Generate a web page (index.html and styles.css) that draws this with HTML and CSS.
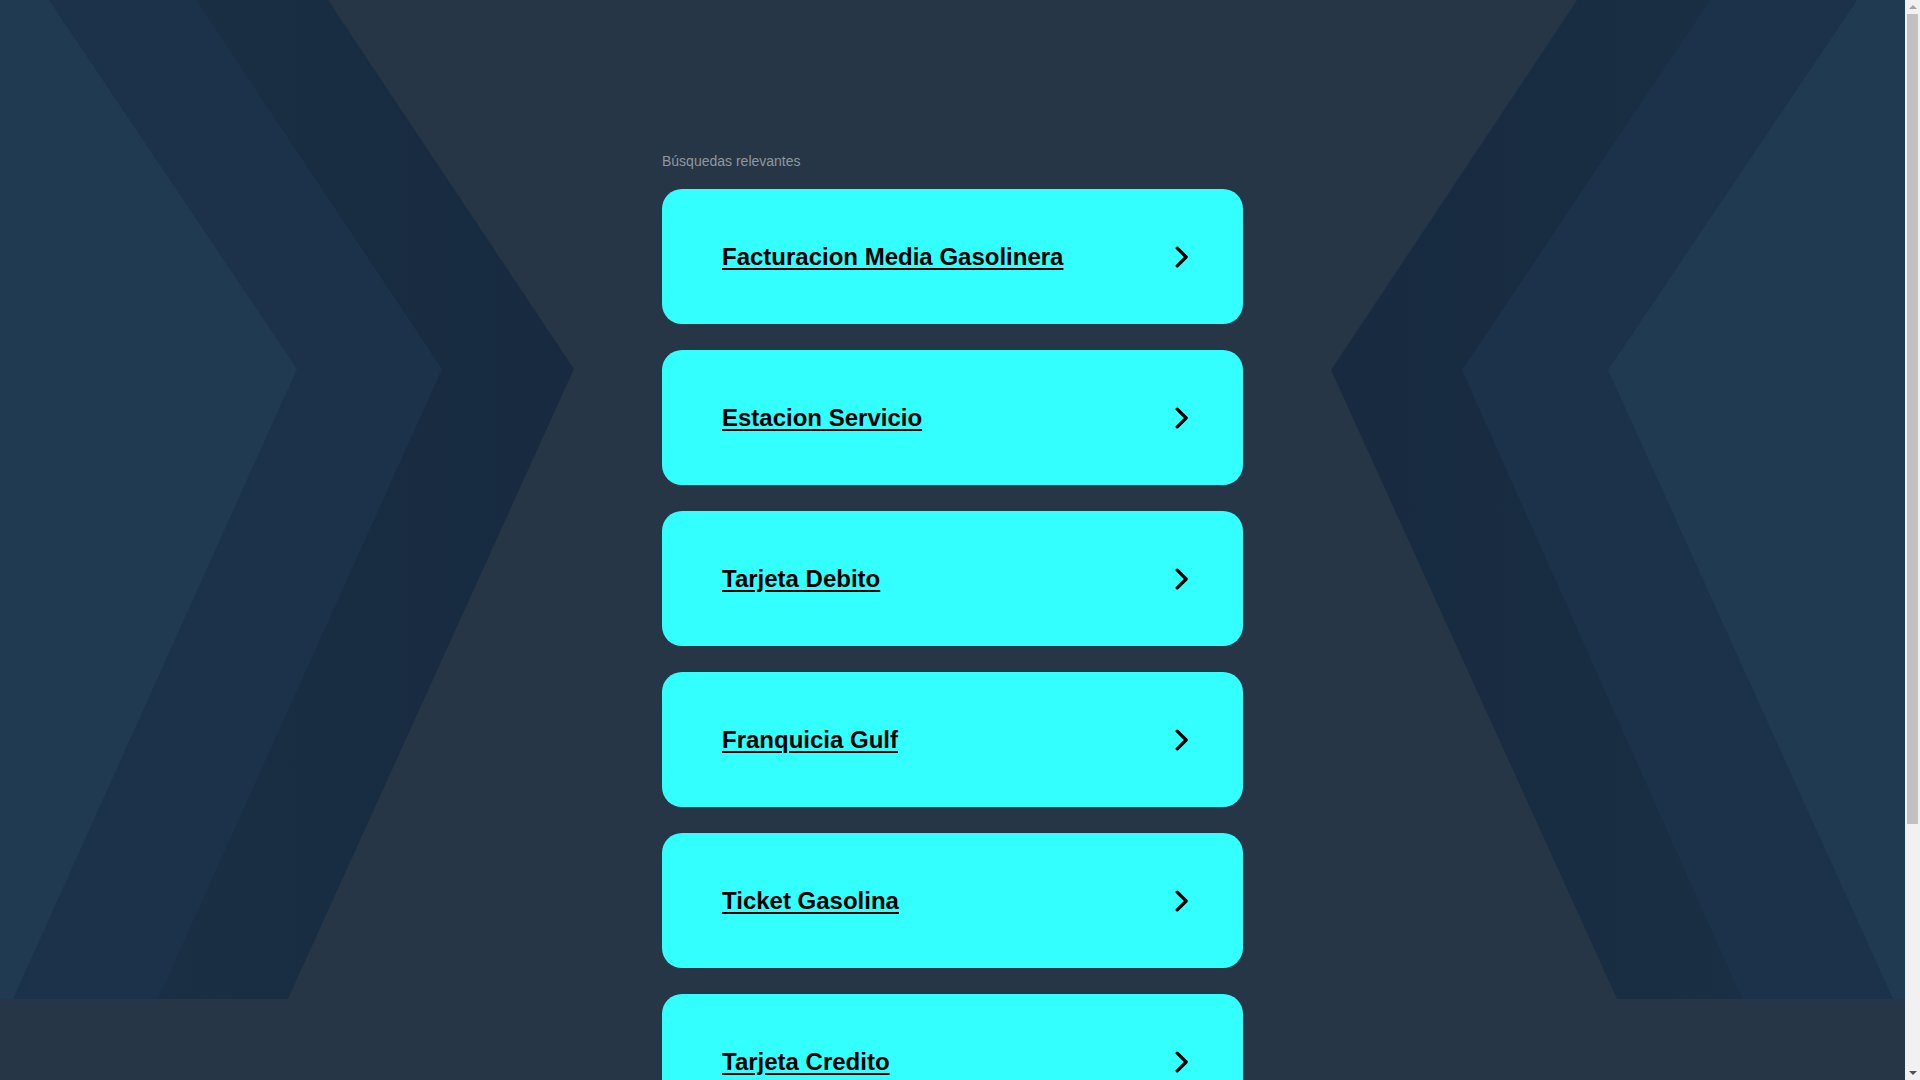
FILE: index.html
```html
<!DOCTYPE html>
<html lang="es">
<head>
<meta charset="utf-8">
<title>Búsquedas relevantes</title>
<link rel="stylesheet" href="styles.css">
</head>
<body>
<div class="page">
  <svg class="backdrop" viewBox="0 0 1905 999" preserveAspectRatio="none" aria-hidden="true">
    <defs>
      <linearGradient id="gl" x1="0" y1="0" x2="1" y2="0">
        <stop offset="0" stop-color="#1b3046"/>
        <stop offset="1" stop-color="#172a3f"/>
      </linearGradient>
      <linearGradient id="gr" x1="1" y1="0" x2="0" y2="0">
        <stop offset="0" stop-color="#1b3046"/>
        <stop offset="1" stop-color="#172a3f"/>
      </linearGradient>
    </defs>
    <polygon points="0,0 328,0 574,369 288,999 0,999" fill="url(#gl)"/>
    <polygon points="0,0 196,0 442,369 158,999 0,999" fill="#1c324a"/>
    <polygon points="0,0 49,0 297,369 13,999 0,999" fill="#1f3a51"/>
    <polygon points="1905,0 1577,0 1331,370 1617,999 1905,999" fill="url(#gr)"/>
    <polygon points="1905,0 1710,0 1462,370 1742,999 1905,999" fill="#1c324a"/>
    <polygon points="1905,0 1857,0 1608,370 1893,999 1905,999" fill="#1f3a51"/>
  </svg>
  <main class="content">
    <p class="label">Búsquedas relevantes</p>
    <ul class="links">
      <li><a class="card" href="#"><span class="card-text">Facturacion Media Gasolinera</span><svg class="chev" viewBox="0 0 14 22" width="14" height="22"><polyline points="2.2,2.2 11.2,11 2.2,19.8"/></svg></a></li>
      <li><a class="card" href="#"><span class="card-text">Estacion Servicio</span><svg class="chev" viewBox="0 0 14 22" width="14" height="22"><polyline points="2.2,2.2 11.2,11 2.2,19.8"/></svg></a></li>
      <li><a class="card" href="#"><span class="card-text">Tarjeta Debito</span><svg class="chev" viewBox="0 0 14 22" width="14" height="22"><polyline points="2.2,2.2 11.2,11 2.2,19.8"/></svg></a></li>
      <li><a class="card" href="#"><span class="card-text">Franquicia Gulf</span><svg class="chev" viewBox="0 0 14 22" width="14" height="22"><polyline points="2.2,2.2 11.2,11 2.2,19.8"/></svg></a></li>
      <li><a class="card" href="#"><span class="card-text">Ticket Gasolina</span><svg class="chev" viewBox="0 0 14 22" width="14" height="22"><polyline points="2.2,2.2 11.2,11 2.2,19.8"/></svg></a></li>
      <li><a class="card" href="#"><span class="card-text">Tarjeta Credito</span><svg class="chev" viewBox="0 0 14 22" width="14" height="22"><polyline points="2.2,2.2 11.2,11 2.2,19.8"/></svg></a></li>
    </ul>
  </main>
</div>
<div class="scrollbar" aria-hidden="true">
  <span class="sb-arrow sb-up"></span>
  <span class="sb-thumb"></span>
  <span class="sb-arrow sb-down"></span>
</div>
</body>
</html>
```

FILE: styles.css
```css
html, body {
  margin: 0;
  padding: 0;
}

body {
  background: #263646;
  font-family: "Liberation Sans", Arial, sans-serif;
  padding-right: 15px;
}

.page {
  display: grid;
  grid-template-columns: 100%;
}

.backdrop {
  grid-area: 1 / 1;
  align-self: start;
  width: 100%;
  height: 999px;
  display: block;
}

.content {
  grid-area: 1 / 1;
  width: 581px;
  margin: 0 auto;
  padding: 153px 0 274px;
  position: relative;
}

.label {
  margin: 0 0 20px;
  font-size: 14px;
  line-height: 16px;
  color: #8f989f;
}

.links {
  list-style: none;
  margin: 0;
  padding: 0;
  display: flex;
  flex-direction: column;
  gap: 26px;
}

.card {
  display: flex;
  align-items: center;
  box-sizing: border-box;
  height: 135px;
  padding: 0 54px 0 60px;
  background: #33ffff;
  border-radius: 20px;
  color: #000;
  text-decoration: none;
}

.card-text {
  font-size: 24px;
  font-weight: bold;
  text-decoration: underline;
  text-decoration-thickness: 2px;
  text-underline-offset: 3px;
}

.chev {
  margin-left: auto;
  flex: none;
  fill: none;
  stroke: #000;
  stroke-width: 3.2;
  stroke-linecap: round;
  stroke-linejoin: round;
}

/* imitation of the browser's vertical scrollbar */
.scrollbar {
  position: fixed;
  top: 0;
  right: 0;
  width: 15px;
  height: 100vh;
  background: #f1f1f1;
  display: flex;
  flex-direction: column;
  align-items: center;
}

.sb-arrow {
  flex: none;
  width: 0;
  height: 0;
  border-left: 4px solid transparent;
  border-right: 4px solid transparent;
}

.sb-up {
  margin: 5px 0 4px;
  border-bottom: 4px solid #a3a3a3;
}

.sb-down {
  margin: auto 0 5px;
  border-top: 4px solid #505050;
}

.sb-thumb {
  flex: none;
  width: 11px;
  height: 810px;
  margin-top: 1px;
  background: #c1c1c1;
}
```
